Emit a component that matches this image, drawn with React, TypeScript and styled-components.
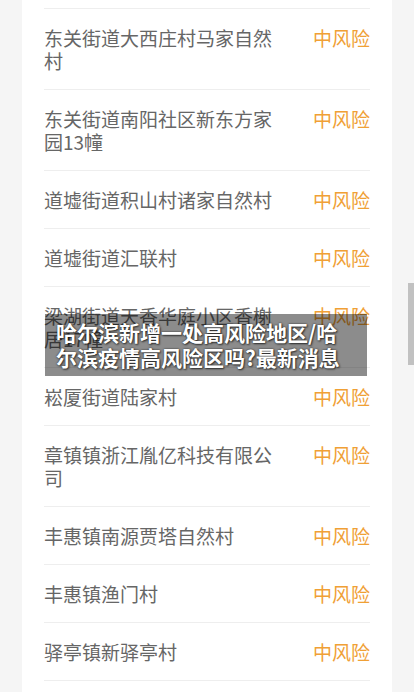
import React from "react";
import styled, { createGlobalStyle } from "styled-components";

const GlobalStyle = createGlobalStyle`
  html, body {
    margin: 0;
    padding: 0;
    background: #f5f5f5;
    overflow: hidden;
  }
  body {
    font-family: "Noto Sans CJK SC", "Noto Sans", sans-serif;
  }
`;

const Page = styled.div`
  position: relative;
  width: 414px;
  height: 692px;
  overflow: hidden;
  background: #f5f5f5;
`;

const Card = styled.div`
  margin: 0 22px;
  padding: 8px 22px 0;
  background: #ffffff;
  min-height: 692px;
  box-sizing: border-box;
`;

const Row = styled.div`
  display: flex;
  align-items: flex-start;
  justify-content: space-between;
  padding: 17px 0;
  border-top: 1px solid #eeeeee;
  &:last-child {
    border-bottom: 1px solid #eeeeee;
  }
`;

const Name = styled.div`
  flex: none;
  width: 230px;
  font-size: 19px;
  line-height: 23px;
  color: #666666;
`;

const Risk = styled.div<{ $level: "mid" | "high" }>`
  flex: none;
  font-size: 19px;
  line-height: 23px;
  color: ${(p) => (p.$level === "high" ? "#e0483a" : "#f0a035")};
`;

const Banner = styled.div`
  position: absolute;
  left: 45px;
  top: 314px;
  width: 322px;
  box-sizing: border-box;
  padding: 6px 11px;
  background: rgba(0, 0, 0, 0.45);
  color: #ffffff;
  font-family: "Noto Sans CJK SC", "Noto Sans", sans-serif;
  font-weight: 700;
  font-size: 21px;
  line-height: 25px;
  text-shadow: 0 0 2px rgba(0, 0, 0, 0.7), 1px 1px 2px rgba(0, 0, 0, 0.6);
`;

const ScrollThumb = styled.div`
  position: absolute;
  right: 0;
  top: 283px;
  width: 6px;
  height: 82px;
  background: #c1c1c1;
`;

const areas = [
  "东关街道大西庄村马家自然村",
  "东关街道南阳社区新东方家园13幢",
  "道墟街道积山村诸家自然村",
  "道墟街道汇联村",
  "梁湖街道天香华庭小区香榭居17幢",
  "崧厦街道陆家村",
  "章镇镇浙江胤亿科技有限公司",
  "丰惠镇南源贾塔自然村",
  "丰惠镇渔门村",
  "驿亭镇新驿亭村",
];

export default function App() {
  return (
    <Page>
      <GlobalStyle />
      <Card>
        {areas.map((a) => (
          <Row key={a}>
            <Name>{a}</Name>
            <Risk $level="mid">中风险</Risk>
          </Row>
        ))}
      </Card>
      <Banner>哈尔滨新增一处高风险地区/哈尔滨疫情高风险区吗?最新消息</Banner>
      <ScrollThumb />
    </Page>
  );
}
